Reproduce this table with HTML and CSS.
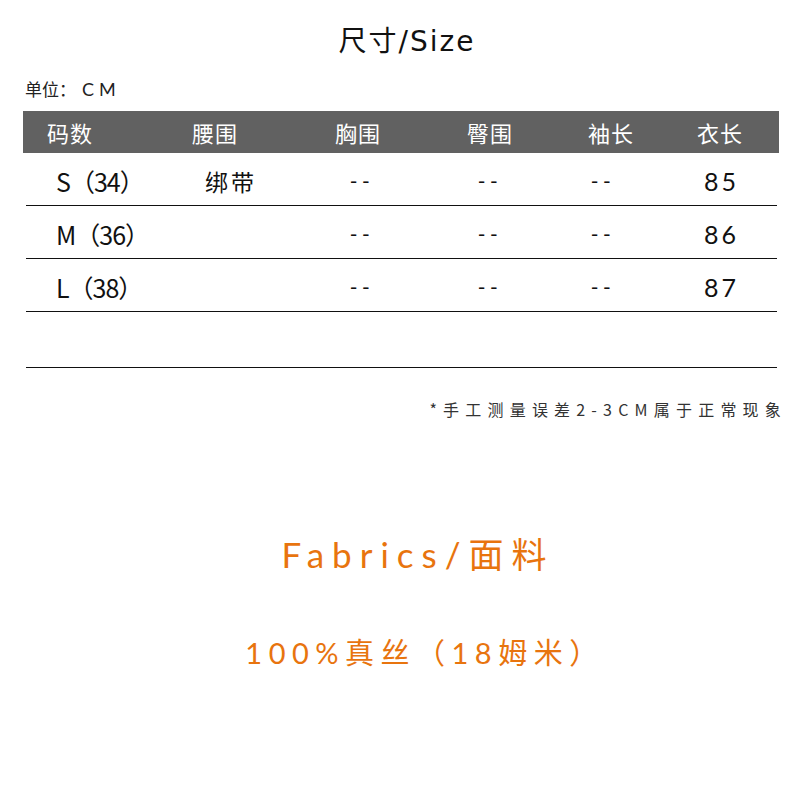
FILE: index.html
```html
<!DOCTYPE html>
<html lang="zh">
<head>
<meta charset="utf-8">
<title>尺寸/Size</title>
<link rel="stylesheet" href="styles.css">
</head>
<body>
<div class="page">
  <h1 class="title">尺寸/Size</h1>
  <div class="unit">单位：<span class="unit-cm">CM</span></div>
  <div class="table">
    <div class="thead">
      <div>码数</div><div>腰围</div><div>胸围</div><div>臀围</div><div>袖长</div><div>衣长</div>
    </div>
    <div class="trow">
      <div class="size">S（34）</div><div class="cn">绑带</div><div class="dash">--</div><div class="dash">--</div><div class="dash">--</div><div class="num">85</div>
    </div>
    <div class="trow">
      <div class="size">M（36）</div><div class="cn"></div><div class="dash">--</div><div class="dash">--</div><div class="dash">--</div><div class="num">86</div>
    </div>
    <div class="trow">
      <div class="size">L（38）</div><div class="cn"></div><div class="dash">--</div><div class="dash">--</div><div class="dash">--</div><div class="num">87</div>
    </div>
    <div class="trow empty"></div>
  </div>
  <p class="note">*手工测量误差2-3CM属于正常现象</p>
  <h2 class="fabric-title">Fabrics/面料</h2>
  <p class="fabric">100%真丝（18姆米）</p>
</div>
</body>
</html>
```

FILE: styles.css
```css
html, body {
  margin: 0;
  padding: 0;
  background: #ffffff;
}
.page {
  width: 800px;
  height: 800px;
  padding: 24px 0 0 0;
  box-sizing: border-box;
  font-family: "Noto Sans CJK SC", "DejaVu Sans", sans-serif;
  color: #111;
}
.title {
  margin: 0 0 0 14px;
  font-size: 28px;
  font-weight: normal;
  text-align: center;
  line-height: 36px;
  letter-spacing: 2px;
  font-family: "DejaVu Sans", "Noto Sans CJK SC", sans-serif;
}
.unit {
  margin: 17px 0 0 25px;
  font-size: 17px;
  line-height: 24px;
  color: #222;
}
.unit-cm {
  margin-left: 6px;
  letter-spacing: 5px;
  font-family: "Lato", sans-serif;
  font-size: 18px;
}
.table {
  margin: 10px 21px 0 23px;
}
.thead {
  display: grid;
  grid-template-columns: 145px 143px 132px 121px 109px 1fr;
  padding-left: 24px;
  height: 42px;
  align-items: center;
  background: #616161;
  color: #ffffff;
  font-size: 22px;
  letter-spacing: 1px;
}
.trow {
  display: grid;
  grid-template-columns: 145px 145px 128px 113px 116px 1fr;
  padding-left: 34px;
  margin: 0 2px 0 3px;
  align-items: center;
  border-bottom: 1px solid #111;
  font-size: 23px;
  padding-top: 4px;
  box-sizing: border-box;
  height: 53px;
}
.trow:first-of-type {
  height: 52px;
}
.trow.empty {
  height: 56px;
}
.size {
  font-family: "Noto Sans CJK SC", sans-serif;
  font-size: 25px;
  letter-spacing: -1px;
  margin-left: -4px;
}
.cn {
  letter-spacing: 3px;
  font-size: 23px;
}
.dash {
  font-family: "DejaVu Sans", sans-serif;
  font-size: 20px;
  letter-spacing: 5px;
}
.num {
  font-family: "Lato", sans-serif;
  font-size: 25px;
  letter-spacing: 3px;
  margin-left: -3px;
}
.note {
  margin: 29px 13px 0 0;
  text-align: right;
  font-size: 16px;
  line-height: 24px;
  letter-spacing: 6.2px;
  color: #333;
}
.fabric-title {
  margin: 111px 0 0 36px;
  text-align: center;
  font-family: "Lato", "Noto Sans CJK SC", sans-serif;
  font-weight: normal;
  font-size: 35px;
  line-height: 44px;
  letter-spacing: 8px;
  color: #e8740e;
}
.fabric {
  margin: 57px 0 0 50px;
  text-align: center;
  font-family: "Lato", "Noto Sans CJK SC", sans-serif;
  font-size: 29px;
  line-height: 40px;
  letter-spacing: 6.5px;
  color: #e8740e;
}
```
